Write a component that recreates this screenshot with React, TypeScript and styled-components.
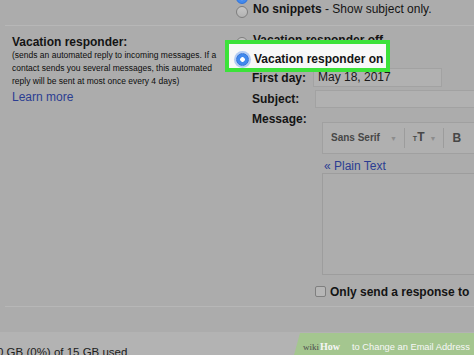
import React from 'react'
import styled, { createGlobalStyle } from 'styled-components'

const GlobalStyle = createGlobalStyle`
  html, body {
    margin: 0;
    padding: 0;
    background: #acacac;
  }
  body {
    overflow: hidden;
  }
`

const Page = styled.div`
    position: relative;
    width: 474px;
    height: 355px;
    overflow: hidden;
    background: #acacac;
    color: #141414;
    font-family: "Liberation Sans", Arial, sans-serif;
    font-size: 12px;
    line-height: 14px;
`

const TopOptions = styled.div`
    margin-top: -12px;
    padding: 0 0 9px 236px;
`

const OptionRow = styled.div`
    display: flex;
    align-items: flex-start;
    gap: 5px;
    height: 14px;
    white-space: nowrap;
`

const Radio = styled.span<{ $on?: boolean; $glow?: boolean }>`
    flex: none;
    box-sizing: border-box;
    width: ${p => (p.$glow ? '13px' : '12px')};
    height: ${p => (p.$glow ? '13px' : '12px')};
    margin-top: ${p => (p.$glow ? '1px' : '4px')};
    border-radius: 50%;
    border: 1px solid ${p => (p.$on ? '#3173d8' : '#7e7e7e')};
    background: ${p => (p.$on
        ? 'radial-gradient(circle, #ffffff 0 2px, #4189ee 2.6px)'
        : 'linear-gradient(#c6c6c6, #b3b3b3)')};
    box-shadow: ${p => (p.$glow ? '0 0 0 2px rgba(110, 160, 240, 0.5)' : 'none')};
`

const Bold = styled.b`
    font-weight: 700;
`

const Divider = styled.div`
    height: 1px;
    margin-left: 5px;
    background: #b7b7b7;
`

const Main = styled.div`
    display: flex;
    height: 280px;
`

const LeftCol = styled.div`
    box-sizing: border-box;
    width: 225px;
    flex: none;
    padding: 9px 0 0 12px;
`

const SectionTitle = styled.div`
    font-weight: 700;
    font-size: 12px;
    line-height: 14px;
`

const Note = styled.div`
    font-size: 8.5px;
    line-height: 13px;
    color: #0c0c0c;
    white-space: nowrap;
`

const Link = styled.a`
    display: block;
    color: #2b3d92;
    text-decoration: none;
    font-size: 12px;
`

const LearnMore = styled(Link)`
    margin-top: 2px;
    line-height: 14px;
`

const RightCol = styled.div`
    flex: 1;
    min-width: 0;
    display: flex;
    flex-direction: column;
`

const OffRow = styled(OptionRow)`
    margin-top: 7px;
    padding-left: 11px;
`

const HighlightBox = styled.div`
    position: relative;
    z-index: 1;
    box-sizing: border-box;
    width: 165px;
    height: 32px;
    margin-top: -7px;
    padding: 8px 0 0 7px;
    border: 4px solid #3ce23a;
    background: #f8f8f8;
    display: flex;
    align-items: flex-start;
    gap: 5px;
    white-space: nowrap;
`

const Fields = styled.div`
    margin-top: -4px;
    padding-left: 27px;
`

const FieldRow = styled.div<{ $gap?: number }>`
    display: flex;
    align-items: center;
    margin-top: ${p => p.$gap || 0}px;
    white-space: nowrap;
`

const Label = styled.div<{ $w?: number }>`
    width: ${p => p.$w || 61}px;
    flex: none;
    font-weight: 700;
`

const Input = styled.div<{ $w?: number; $h: number }>`
    box-sizing: border-box;
    width: ${p => (p.$w ? `${p.$w}px` : 'auto')};
    flex: ${p => (p.$w ? 'none' : '1')};
    height: ${p => p.$h}px;
    margin-right: ${p => (p.$w ? 0 : -10)}px;
    padding: 0 4px;
    border: 1px solid #a2a2a2;
    background: #b1b1b1;
    line-height: ${p => p.$h - 2}px;
    color: #1a1a1a;
`

const Editor = styled.div`
    margin: -4px -12px 0 70px;
`

const Toolbar = styled.div`
    box-sizing: border-box;
    height: 32px;
    display: flex;
    align-items: center;
    padding-left: 8px;
    border: 1px solid #a0a0a0;
    background: #b0b0b0;
    color: #474747;
    font-weight: 700;
    font-size: 10px;
    white-space: nowrap;
`

const Caret = styled.span<{ $ml?: number }>`
    margin: 1px 7px 0 ${p => p.$ml || 0}px;
    font-size: 7px;
    color: #8c8c8c;
`

const ToolSep = styled.span`
    width: 1px;
    height: 20px;
    background: #9c9c9c;
    margin-right: 8px;
`

const SizeIcon = styled.span`
    display: flex;
    align-items: baseline;
    font-size: 12px;
    margin-right: 5px;
    & small {
        font-size: 7px;
    }
`

const BoldIcon = styled.span`
    font-size: 12px;
`

const PlainText = styled(Link)`
    margin-top: 6px;
    padding-left: 2px;
    line-height: 13px;
`

const TextArea = styled.div`
    box-sizing: border-box;
    height: 102px;
    border: 1px solid #9d9d9d;
    background: #adadad;
`

const CheckRow = styled.div`
    display: flex;
    align-items: flex-start;
    gap: 4px;
    margin: 10px 0 0 63px;
    font-weight: 700;
    white-space: nowrap;
`

const Checkbox = styled.span`
    flex: none;
    box-sizing: border-box;
    width: 11px;
    height: 11px;
    margin-top: 1px;
    border: 1px solid #7f7f7f;
    border-radius: 2px;
    background: #b6b6b6;
`

const Spacer = styled.div`
    height: 25px;
`

const StorageBar = styled.div`
    height: 30px;
    padding-top: 13px;
    background: #b3b3b3;
    font-size: 11.5px;
    color: #202020;
    white-space: nowrap;
    & span {
        margin-left: -3px;
    }
`

const Watermark = styled.div`
    position: absolute;
    right: 0;
    bottom: 0;
    width: 180px;
    height: 22px;
    box-sizing: border-box;
    padding: 7px 0 0 9px;
    background: #a4c68f;
    clip-path: polygon(6px 0, 100% 0, 100% 100%, 0 100%);
    display: flex;
    align-items: baseline;
    white-space: nowrap;
`

const WikiText = styled.span`
    font-family: "Liberation Serif", "Times New Roman", serif;
    font-size: 9px;
    color: #4d4d4d;
`

const HowText = styled.span`
    font-family: "Liberation Serif", "Times New Roman", serif;
    font-weight: 700;
    font-size: 10px;
    color: #f6f6f6;
    margin: 0 12px 0 1px;
`

const WatermarkTitle = styled.span`
    font-size: 9.3px;
    color: #f7f7f7;
`

export default function App() {
    return (
        <Page>
            <GlobalStyle />
            <TopOptions>
                <OptionRow>
                    <Radio $on />
                </OptionRow>
                <OptionRow>
                    <Radio />
                    <span><Bold>No snippets</Bold> - Show subject only.</span>
                </OptionRow>
            </TopOptions>
            <Divider />
            <Main>
                <LeftCol>
                    <SectionTitle>Vacation responder:</SectionTitle>
                    <Note>(sends an automated reply to incoming messages. If a</Note>
                    <Note>contact sends you several messages, this automated</Note>
                    <Note>reply will be sent at most once every 4 days)</Note>
                    <LearnMore>Learn more</LearnMore>
                </LeftCol>
                <RightCol>
                    <OffRow>
                        <Radio />
                        <Bold>Vacation responder off</Bold>
                    </OffRow>
                    <HighlightBox>
                        <Radio $on $glow />
                        <Bold>Vacation responder on</Bold>
                    </HighlightBox>
                    <Fields>
                        <FieldRow>
                            <Label>First day:</Label>
                            <Input $w={129} $h={19}>May 18, 2017</Input>
                        </FieldRow>
                        <FieldRow $gap={3}>
                            <Label $w={63}>Subject:</Label>
                            <Input $h={18} />
                        </FieldRow>
                        <FieldRow $gap={4}>
                            <Label>Message:</Label>
                        </FieldRow>
                        <Editor>
                            <Toolbar>
                                <span>Sans Serif</span>
                                <Caret $ml={10}>▼</Caret>
                                <ToolSep />
                                <SizeIcon><small>T</small>T</SizeIcon>
                                <Caret>▼</Caret>
                                <ToolSep />
                                <BoldIcon>B</BoldIcon>
                            </Toolbar>
                            <PlainText>« Plain Text</PlainText>
                            <TextArea />
                        </Editor>
                        <CheckRow>
                            <Checkbox />
                            <span>Only send a response to</span>
                        </CheckRow>
                    </Fields>
                </RightCol>
            </Main>
            <Divider />
            <Spacer />
            <StorageBar>
                <span>0 GB (0%) of 15 GB used</span>
            </StorageBar>
            <Watermark>
                <WikiText>wiki</WikiText>
                <HowText>How</HowText>
                <WatermarkTitle>to Change an Email Address</WatermarkTitle>
            </Watermark>
        </Page>
    )
}
